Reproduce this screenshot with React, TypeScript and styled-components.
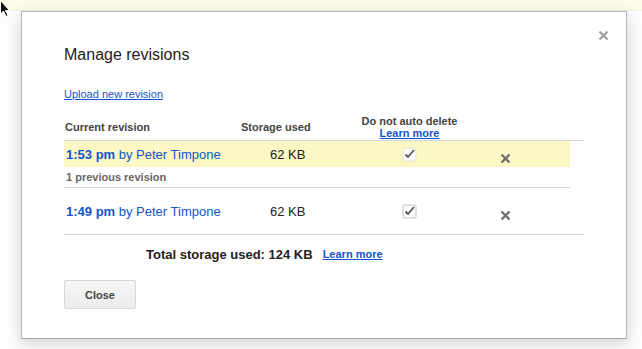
import * as React from 'react'
import styled, { createGlobalStyle } from 'styled-components'

const colors = {
  link: '#1155cc',
  text: '#222',
  label: '#444',
  muted: '#666',
  rule: '#d6d6d6',
  highlight: '#fbf8c6',
}

const GlobalStyle = createGlobalStyle`
  html, body {
    margin: 0;
    padding: 0;
    background: #fdfdfd;
    font-family: "Liberation Sans", Arial, sans-serif;
  }
`

const Page = styled.div`
  position: relative;
  width: 642px;
  height: 349px;
  overflow: hidden;
`

const TopBand = styled.div`
  height: 10px;
  background: #fdfce8;
  border-bottom: 1px solid #f3f2e2;
`

const Cursor = styled.svg`
  position: absolute;
  left: 0;
  top: 0;
`

const Dialog = styled.section`
  position: relative;
  box-sizing: border-box;
  margin-left: 21px;
  width: 606px;
  height: 328px;
  padding: 33px 42px 0;
  background: #fff;
  border: 1px solid #b9b9b9;
  border-bottom-color: #a8a8a8;
  box-shadow: 0 4px 14px rgba(0, 0, 0, 0.18);
`

const CloseIcon = styled.svg`
  position: absolute;
  top: 18px;
  right: 17px;
`

const Title = styled.h2`
  margin: 0;
  font-size: 16px;
  line-height: 20px;
  font-weight: normal;
  color: ${colors.text};
`

const TextLink = styled.a<{ bold?: boolean }>`
  color: ${colors.link};
  font-size: 11px;
  line-height: 13px;
  font-weight: ${p => (p.bold ? 'bold' : 'normal')};
  text-decoration: underline;
  cursor: pointer;
`

const UploadRow = styled.div`
  margin-top: 22px;
  height: 14px;
  display: flex;
  align-items: center;
`

const Table = styled.div`
  margin-top: 13px;
`

const Row = styled.div<{ height: number; highlight?: boolean; ruled?: boolean; short?: boolean }>`
  display: grid;
  grid-template-columns: 176px 100px 138px 54px 1fr;
  align-items: center;
  height: ${p => p.height}px;
  background: ${p => (p.highlight ? colors.highlight : 'transparent')};
  border-bottom: ${p => (p.ruled ? `1px solid ${colors.rule}` : 'none')};
  margin-right: ${p => (p.short ? '14px' : '0')};
`

const HeadCell = styled.div<{ center?: boolean }>`
  font-size: 11px;
  font-weight: bold;
  color: ${colors.label};
  padding-left: 1px;
  text-align: ${p => (p.center ? 'center' : 'left')};
  line-height: 12px;
`

const RevisionCell = styled.div`
  font-size: 13px;
  color: ${colors.link};
  padding-left: 2px;
  white-space: nowrap;
`

const Time = styled.span`
  font-weight: bold;
`

const SizeCell = styled.div`
  font-size: 13px;
  color: ${colors.text};
  padding-left: 30px;
`

const IconCell = styled.div<{ drop?: number }>`
  display: flex;
  justify-content: center;
  padding-top: ${p => p.drop || 0}px;
`

const SubLabel = styled.div`
  grid-column: 1 / -1;
  font-size: 11px;
  font-weight: bold;
  color: ${colors.muted};
  padding-left: 2px;
`

const Total = styled.div`
  display: flex;
  align-items: center;
  gap: 10px;
  height: 38px;
  padding-left: 82px;
`

const TotalText = styled.span`
  font-size: 13px;
  font-weight: bold;
  color: ${colors.text};
`

const Button = styled.button`
  margin-top: 7px;
  width: 72px;
  height: 29px;
  font-family: inherit;
  font-size: 11px;
  font-weight: bold;
  color: #444;
  background: linear-gradient(#f6f6f6, #ececec);
  border: 1px solid #d6d6d6;
  border-radius: 2px;
`

const Check = ({ boxed }: { boxed?: boolean }) => (
  <svg width="15" height="15" viewBox="0 0 15 15">
    <rect x="1" y="1" width="13" height="13" rx="1" fill="#fafafa" stroke={boxed ? '#c4c4c4' : '#e8e6cf'} />
    <path d="M3.5 7.5 L6 10 L12 3" fill="none" stroke="#555" strokeWidth="1.8" />
  </svg>
)

const Cross = () => (
  <svg width="11" height="11" viewBox="0 0 11 11">
    <path d="M1.5 1.5 L9.5 9.5 M9.5 1.5 L1.5 9.5" stroke="#6f6f6f" strokeWidth="2.4" />
  </svg>
)

const App: React.FC = () => (
  <Page>
    <GlobalStyle />
    <TopBand />
    <Dialog>
      <CloseIcon width="11" height="11" viewBox="0 0 11 11">
        <path d="M1.5 1.5 L9.5 9.5 M9.5 1.5 L1.5 9.5" stroke="#a0a0a0" strokeWidth="2.2" />
      </CloseIcon>
      <Title>Manage revisions</Title>
      <UploadRow>
        <TextLink>Upload new revision</TextLink>
      </UploadRow>
      <Table>
        <Row height={26} ruled>
          <HeadCell>Current revision</HeadCell>
          <HeadCell>Storage used</HeadCell>
          <HeadCell center>
            Do not auto delete
            <br />
            <TextLink bold>Learn more</TextLink>
          </HeadCell>
          <div />
          <div />
        </Row>
        <Row height={26} highlight short>
          <RevisionCell>
            <Time>1:53 pm</Time> by Peter Timpone
          </RevisionCell>
          <SizeCell>62 KB</SizeCell>
          <IconCell>
            <Check />
          </IconCell>
          <IconCell drop={8}>
            <Cross />
          </IconCell>
          <div />
        </Row>
        <Row height={20} ruled short>
          <SubLabel>1 previous revision</SubLabel>
        </Row>
        <Row height={46} ruled>
          <RevisionCell>
            <Time>1:49 pm</Time> by Peter Timpone
          </RevisionCell>
          <SizeCell>62 KB</SizeCell>
          <IconCell>
            <Check boxed />
          </IconCell>
          <IconCell drop={8}>
            <Cross />
          </IconCell>
          <div />
        </Row>
      </Table>
      <Total>
        <TotalText>Total storage used: 124 KB</TotalText>
        <TextLink bold>Learn more</TextLink>
      </Total>
      <Button>Close</Button>
    </Dialog>
    <Cursor width="12" height="18" viewBox="0 0 12 18">
      <path d="M0.5 0.5 L0.5 14 L3.5 11 L6 16.5 L8 15.5 L5.5 10.5 L9.5 10.5 Z" fill="#111" stroke="#fff" strokeWidth="1" />
    </Cursor>
  </Page>
)

export default App
